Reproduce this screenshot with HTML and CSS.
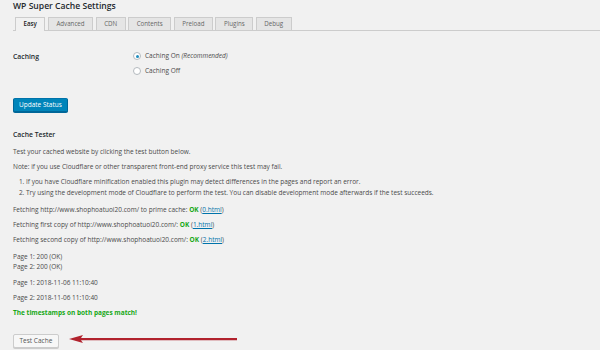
FILE: index.html
```html
<!DOCTYPE html>
<html>
<head>
<meta charset="utf-8">
<link rel="stylesheet" href="styles.css">
</head>
<body>
<div class="wrap">
  <h1 class="title">WP Super Cache Settings</h1>
  <div class="tabs">
    <span class="tab active">Easy</span>
    <span class="tab">Advanced</span>
    <span class="tab">CDN</span>
    <span class="tab">Contents</span>
    <span class="tab">Preload</span>
    <span class="tab">Plugins</span>
    <span class="tab">Debug</span>
  </div>

  <div class="form-row">
    <div class="label">Caching</div>
    <div class="options">
      <label class="radio-line"><span class="radio checked"></span><span>Caching On <em>(Recommended)</em></span></label>
      <label class="radio-line"><span class="radio"></span><span>Caching Off</span></label>
    </div>
  </div>

  <div class="btn-row"><span class="btn primary">Update Status</span></div>

  <h3 class="section">Cache Tester</h3>
  <p class="line">Test your cached website by clicking the test button below.</p>
  <p class="line">Note: if you use Cloudflare or other transparent front-end proxy service this test may fail.</p>
  <ol class="list">
    <li>If you have Cloudflare minification enabled this plugin may detect differences in the pages and report an error.</li>
    <li>Try using the development mode of Cloudflare to perform the test. You can disable development mode afterwards if the test succeeds.</li>
  </ol>
  <p class="line gap7">Fetching http://www.shophoatuoi20.com/ to prime cache: <b class="ok">OK</b> (<a href="#">0.html</a>)</p>
  <p class="line">Fetching first copy of http://www.shophoatuoi20.com/: <b class="ok">OK</b> (<a href="#">1.html</a>)</p>
  <p class="line">Fetching second copy of http://www.shophoatuoi20.com/: <b class="ok">OK</b> (<a href="#">2.html</a>)</p>
  <p class="line gap7">Page 1: 200 (OK)<br>Page 2: 200 (OK)</p>
  <p class="line gap6">Page 1: 2018-11-06 11:10:40</p>
  <p class="line">Page 2: 2018-11-06 11:10:40</p>
  <p class="line"><b class="ok">The timestamps on both pages match!</b></p>

  <div class="test-row">
    <span class="btn secondary">Test Cache</span>
    <svg class="arrow" width="170" height="10" viewBox="0 0 170 10">
      <polygon points="0,5 14,1 12,4 168,4 168,6.2 12,6.2 14,9" fill="#b1222d"/>
    </svg>
  </div>
</div>
</body>
</html>
```
FILE: styles.css
```css
html, body {
  margin: 0;
  padding: 0;
  background: #f1f1f1;
}
body {
  font-family: "Open Sans", "Noto Sans", sans-serif;
  font-size: 6.5px;
  line-height: 10px;
  color: #4a4a4a;
  width: 600px;
  height: 350px;
  overflow: hidden;
}
.wrap {
  padding-left: 13px;
}
.title {
  margin: 0;
  font-size: 8.6px;
  font-weight: 600;
  line-height: 12px;
  color: #23282d;
}
.tabs {
  display: flex;
  gap: 2.5px;
  margin-top: 5px;
  padding-left: 2px;
  border-bottom: 1px solid #ccc;
  height: 13px;
  align-items: flex-end;
}
.tab {
  display: block;
  box-sizing: border-box;
  height: 13px;
  padding: 0 7.5px;
  line-height: 12px;
  border: 1px solid #ccc;
  border-bottom: none;
  background: #e5e5e5;
  color: #666;
  font-weight: 400;
  font-size: 6.2px;
}
.tab.active {
  background: #f1f1f1;
  color: #222;
  font-weight: 600;
  height: 14px;
  margin-bottom: -1px;
}
.form-row {
  display: flex;
  margin-top: 20px;
}
.label {
  width: 119px;
  font-weight: 600;
  color: #23282d;
  font-size: 6.8px;
  line-height: 11px;
}
.options {
  display: flex;
  flex-direction: column;
  gap: 5px;
}
.radio-line {
  display: flex;
  align-items: center;
  gap: 4px;
  line-height: 10px;
}
.radio {
  display: block;
  box-sizing: border-box;
  width: 8px;
  height: 8px;
  border: 1px solid #b4b9be;
  border-radius: 50%;
  background: #fff;
  position: relative;
  margin-left: 1px;
}
.radio.checked::after {
  content: "";
  position: absolute;
  left: 1.5px;
  top: 1.5px;
  width: 3px;
  height: 3px;
  border-radius: 50%;
  background: #1e8cbe;
}
.btn-row {
  margin-top: 22px;
}
.btn {
  display: inline-block;
  box-sizing: border-box;
  height: 14px;
  line-height: 12px;
  padding: 0 5px;
  border: 1px solid;
  border-radius: 2px;
  font-size: 6.5px;
}
.btn.primary {
  background: #0085ba;
  border-color: #0073aa #006799 #006799;
  color: #fff;
  box-shadow: 0 1px 0 #006799;
}
.btn.secondary {
  background: #f7f7f7;
  border-color: #ccc;
  color: #555;
  box-shadow: 0 1px 0 #ccc;
  padding: 0 5.5px;
}
.section {
  margin: 18px 0 0;
  font-size: 6.8px;
  font-weight: 600;
  line-height: 10px;
  color: #23282d;
}
.line {
  margin: 5px 0 0;
}
.section + .line {
  margin-top: 7px;
}
.gap7 {
  margin-top: 7px;
}
.gap6 {
  margin-top: 6px;
}
.list {
  margin: 5px 0 0;
  padding-left: 13px;
}
.list li {
  margin-bottom: 1px;
  line-height: 10px;
}
.list li:last-child {
  margin-bottom: 0;
}
.ok {
  color: #17a817;
  font-weight: 700;
}
a {
  color: #0073aa;
  text-decoration: underline;
}
.test-row {
  display: flex;
  align-items: center;
  margin-top: 16px;
}
.arrow {
  display: block;
  margin-left: 10px;
  margin-top: -5px;
}
```
